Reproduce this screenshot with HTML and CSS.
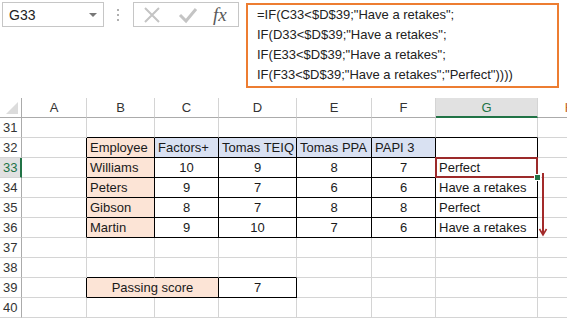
FILE: index.html
```html
<!DOCTYPE html>
<html lang="en">
<head>
    <meta charset="UTF-8">
    <meta name="viewport" content="width=device-width, initial-scale=1.0">
    <title>IF formula</title>
    <link rel="stylesheet" href="styles.css">
</head>
<body>
    <div class="toolbar">
        <div class="namebox">
            <span>G33</span>
            <span class="drop"></span>
        </div>
        <div class="grip"><i></i><i></i><i></i></div>
        <div class="fxbox">
            <svg class="ico" width="18" height="18" viewBox="0 0 18 18">
                <path d="M2 2 L16 16 M16 2 L2 16" stroke="#c4c4c4" stroke-width="2" fill="none"/>
            </svg>
            <svg class="ico" width="20" height="18" viewBox="0 0 20 18">
                <path d="M2 9 L8 15 L18 3" stroke="#c4c4c4" stroke-width="3" fill="none"/>
            </svg>
            <span class="fx">fx</span>
        </div>
        <div class="formula">
            <div>=IF(C33&lt;$D$39;"Have a retakes";</div>
            <div>IF(D33&lt;$D$39;"Have a retakes";</div>
            <div>IF(E33&lt;$D$39;"Have a retakes";</div>
            <div>IF(F33&lt;$D$39;"Have a retakes";"Perfect"))))</div>
        </div>
    </div>

    <div class="sheet">
        <table>
            <colgroup>
                <col class="w-row"><col class="w-a"><col class="w-b"><col class="w-c"><col class="w-d">
                <col class="w-e"><col class="w-f"><col class="w-g"><col class="w-h">
            </colgroup>
            <thead>
                <tr>
                    <th class="corner"><span class="tri"></span></th>
                    <th>A</th><th>B</th><th>C</th><th>D</th><th>E</th><th>F</th>
                    <th class="active">G</th><th class="colh">H</th>
                </tr>
            </thead>
            <tbody>
                <tr>
                    <td class="rh">31</td>
                    <td></td><td class="eb"></td><td class="eb"></td><td class="eb"></td><td class="eb"></td><td class="eb"></td><td class="eb"></td><td></td>
                </tr>
                <tr>
                    <td class="rh">32</td>
                    <td class="er"></td>
                    <td class="box peach">Employee</td>
                    <td class="box blue">Factors+</td>
                    <td class="box blue">Tomas TEIQ</td>
                    <td class="box blue">Tomas PPA</td>
                    <td class="box blue">PAPI 3</td>
                    <td class="box"></td>
                    <td></td>
                </tr>
                <tr>
                    <td class="rh sel">33</td>
                    <td class="er"></td>
                    <td class="box peach">Williams</td>
                    <td class="box num">10</td>
                    <td class="box num">9</td>
                    <td class="box num">8</td>
                    <td class="box num">7</td>
                    <td class="box picked">Perfect<span class="handle"></span></td>
                    <td></td>
                </tr>
                <tr>
                    <td class="rh">34</td>
                    <td class="er"></td>
                    <td class="box peach">Peters</td>
                    <td class="box num">9</td>
                    <td class="box num">7</td>
                    <td class="box num">6</td>
                    <td class="box num">6</td>
                    <td class="box">Have a retakes</td>
                    <td></td>
                </tr>
                <tr>
                    <td class="rh">35</td>
                    <td class="er"></td>
                    <td class="box peach">Gibson</td>
                    <td class="box num">8</td>
                    <td class="box num">7</td>
                    <td class="box num">8</td>
                    <td class="box num">8</td>
                    <td class="box">Perfect</td>
                    <td></td>
                </tr>
                <tr>
                    <td class="rh">36</td>
                    <td class="er"></td>
                    <td class="box peach">Martin</td>
                    <td class="box num">9</td>
                    <td class="box num">10</td>
                    <td class="box num">7</td>
                    <td class="box num">6</td>
                    <td class="box">Have a retakes</td>
                    <td></td>
                </tr>
                <tr>
                    <td class="rh">37</td>
                    <td></td><td></td><td></td><td></td><td></td><td></td><td></td><td></td>
                </tr>
                <tr>
                    <td class="rh">38</td>
                    <td></td><td class="eb"></td><td class="eb"></td><td class="eb"></td><td></td><td></td><td></td><td></td>
                </tr>
                <tr>
                    <td class="rh">39</td>
                    <td class="er"></td>
                    <td class="box peach num" colspan="2">Passing score</td>
                    <td class="box num">7</td>
                    <td></td><td></td><td></td><td></td>
                </tr>
                <tr>
                    <td class="rh">40</td>
                    <td></td><td></td><td></td><td></td><td></td><td></td><td></td><td></td>
                </tr>
            </tbody>
        </table>
        <svg class="arrow" width="10" height="64" viewBox="0 0 10 64">
            <path d="M5 0 L5 62" stroke="#a32a2a" stroke-width="2" fill="none"/>
            <path d="M1.5 56 L5 62 L8.5 56" stroke="#a32a2a" stroke-width="1.6" fill="none"/>
        </svg>
    </div>
</body>
</html>
```

FILE: styles.css
```css
body {
    margin: 0;
    width: 567px;
    height: 320px;
    overflow: hidden;
    background: white;
    font-family: "Liberation Sans", Arial, sans-serif;
    color: #1a1a1a;
}
.toolbar {
    display: flex;
    align-items: flex-start;
    height: 98px;
    padding: 2px 0 0 2px;
    box-sizing: border-box;
}
.namebox {
    width: 102px;
    height: 25px;
    box-sizing: border-box;
    border: 1px solid #c6c6c6;
    padding: 0 6px;
    display: flex;
    align-items: center;
    justify-content: space-between;
    font-size: 14px;
    color: #222;
}
.drop {
    width: 0;
    height: 0;
    border-left: 4px solid transparent;
    border-right: 4px solid transparent;
    border-top: 4px solid #777;
    margin-right: 0;
}
.grip {
    margin: 7px 0 0 13px;
    display: flex;
    flex-direction: column;
    gap: 3px;
}
.grip i {
    width: 2px;
    height: 2px;
    background: #b0b0b0;
}
.fxbox {
    margin-left: 14px;
    width: 106px;
    height: 25px;
    box-sizing: border-box;
    border: 1px solid #c6c6c6;
    display: flex;
    align-items: center;
    padding-left: 9px;
}
.ico {
    margin-right: 17px;
}
.fx {
    font-family: "Liberation Serif", serif;
    font-style: italic;
    font-size: 19px;
    color: #5a5a5a;
    margin-left: -2px;
}
.formula {
    margin: 1px 0 0 7px;
    width: 313px;
    height: 85px;
    box-sizing: border-box;
    border: 2px solid #ed7d31;
    padding: 0 9px;
    font-size: 13px;
    line-height: 20px;
    color: #222;
}
.sheet {
    position: relative;
}
table {
    table-layout: fixed;
    border-collapse: separate;
    border-spacing: 0;
    width: 602px;
    font-size: 13px;
}
.w-row { width: 22px; }
.w-a { width: 65px; }
.w-b { width: 68px; }
.w-c { width: 64px; }
.w-d { width: 78px; }
.w-e { width: 75px; }
.w-f { width: 64px; }
.w-g { width: 102px; }
.w-h { width: 64px; }
tr {
    height: 20px;
}
th, td {
    padding: 0 3px;
    height: 20px;
    box-sizing: border-box;
    white-space: nowrap;
    overflow: hidden;
    border-right: 1px solid #d4d4d4;
    border-bottom: 1px solid #d4d4d4;
    text-align: left;
}
th {
    font-weight: normal;
    text-align: center;
    color: #333;
    border-bottom: 1px solid #ababab;
    border-right: 1px solid #d4d4d4;
}
th.corner {
    position: relative;
    border-right: 1px solid #ababab;
}
.tri {
    position: absolute;
    right: 3px;
    bottom: 3px;
    width: 0;
    height: 0;
    border-left: 12px solid transparent;
    border-bottom: 12px solid #dcdcdc;
}
th.active {
    background: #e1e1e1;
    color: #217346;
    border-bottom: 2px solid #217346;
}
th.colh {
    color: #c0621f;
}
td.rh {
    color: #333;
    border-right: 1px solid #ababab;
}
td.rh.sel {
    background: #e1e1e1;
    color: #217346;
    border-right: 2px solid #217346;
}
.box {
    border-right: 1px solid #000;
    border-bottom: 1px solid #000;
}
.er {
    border-right: 1px solid #000;
}
.eb {
    border-bottom: 1px solid #000;
}
.peach {
    background: #fce4d6;
}
.blue {
    background: #d9e1f2;
}
.num {
    text-align: center;
}
td.picked {
    position: relative;
    overflow: visible;
}
td.picked::after {
    content: "";
    position: absolute;
    left: -1px;
    top: -1px;
    right: -1px;
    bottom: -1px;
    border: 2px solid #9c2a2a;
}
.handle {
    position: absolute;
    right: -4px;
    bottom: -4px;
    width: 5px;
    height: 5px;
    background: #217346;
    border: 1px solid white;
    z-index: 2;
}
.arrow {
    position: absolute;
    left: 538px;
    top: 75px;
}
```
